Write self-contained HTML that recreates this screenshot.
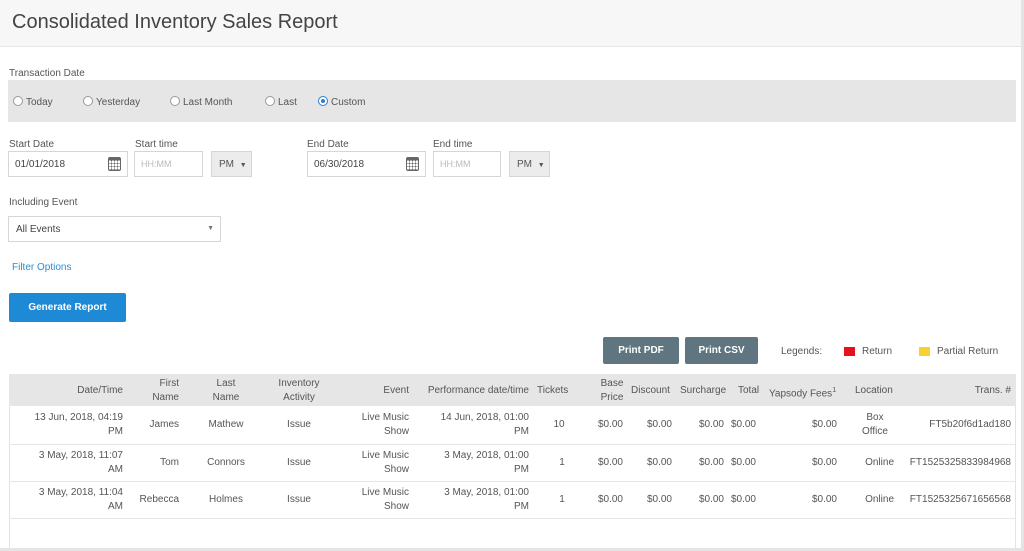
<!DOCTYPE html><html><head><style>
*{margin:0;padding:0;box-sizing:border-box}
body{width:1024px;height:551px;background:#fff;font-family:"Liberation Sans",sans-serif;color:#444;position:relative;overflow:hidden}
.a{position:absolute;white-space:nowrap}
.lbl{font-size:10px;color:#555}
.inp{position:absolute;border:1px solid #d6d6d6;background:#fff;height:26px;font-size:10px;padding:7px 6px;color:#444;white-space:nowrap}
.sel{position:absolute;border:1px solid #d6d6d6;background:#ececec;height:26px;font-size:10px;padding:7px 7px;color:#555;white-space:nowrap}
.rad{display:inline-block;width:10px;height:10px;border:1px solid #999;border-radius:50%;vertical-align:-1px;margin-right:3px;background:#fff;position:relative}
.t{position:absolute;font-size:10px;color:#555;line-height:14px;white-space:nowrap}
.r{text-align:right}.c{text-align:center}
.btn{position:absolute;background:#5f7681;color:#fff;font-size:10px;font-weight:bold;text-align:center;border-radius:2px;line-height:27px}
.cal{position:absolute;right:6px;top:5px;width:13px;height:14px;border:1.5px solid #666;border-top-width:3px;border-radius:2px;background:radial-gradient(circle,#666 0.8px,transparent 1px) 1px 2px/3px 3px}
</style></head><body>
<div class="a" style="left:0;top:0;width:1024px;height:47px;background:#f7f7f7;border-bottom:1px solid #e6e6e6"></div>
<div class="a" style="left:12px;top:11px;font-size:20px;color:#444">Consolidated Inventory Sales Report</div>
<div class="a" style="right:0;top:0;width:3px;height:551px;background:#e4e4e4"></div>
<div class="a" style="left:0;bottom:0;width:1024px;height:3px;background:#e4e4e4"></div>
<div class="a lbl" style="left:9px;top:68px">Transaction Date</div>
<div class="a" style="left:8px;top:80px;width:1008px;height:42px;background:#e6e6e6"></div>
<div class="a lbl" style="left:13px;top:96px"><span class="rad"></span>Today</div>
<div class="a lbl" style="left:83px;top:96px"><span class="rad"></span>Yesterday</div>
<div class="a lbl" style="left:170px;top:96px"><span class="rad"></span>Last Month</div>
<div class="a lbl" style="left:265px;top:96px"><span class="rad"></span>Last</div>
<div class="a lbl" style="left:318px;top:96px"><span class="rad" style="border-color:#2a7fd4"><span style="position:absolute;left:2px;top:2px;width:4px;height:4px;border-radius:50%;background:#2a7fd4"></span></span>Custom</div>
<div class="a lbl" style="left:9px;top:139px">Start Date</div>
<div class="a lbl" style="left:135px;top:139px">Start time</div>
<div class="a lbl" style="left:307px;top:139px">End Date</div>
<div class="a lbl" style="left:433px;top:139px">End time</div>
<div class="inp" style="left:8px;top:151px;width:120px">01/01/2018<span class="cal"></span></div>
<div class="inp" style="left:134px;top:151px;width:69px;color:#bbb;font-size:9px">HH:MM</div>
<div class="sel" style="left:211px;top:151px;width:41px">PM <span style="font-size:7px;margin-left:3px">▼</span></div>
<div class="inp" style="left:307px;top:151px;width:119px">06/30/2018<span class="cal"></span></div>
<div class="inp" style="left:433px;top:151px;width:68px;color:#bbb;font-size:9px">HH:MM</div>
<div class="sel" style="left:509px;top:151px;width:41px">PM <span style="font-size:7px;margin-left:3px">▼</span></div>
<div class="a lbl" style="left:9px;top:197px">Including Event</div>
<div class="inp" style="left:8px;top:216px;width:213px;height:26px;padding-left:7px">All Events<span style="position:absolute;right:6px;top:8px;font-size:7px;color:#777">▼</span></div>
<div class="a" style="left:12px;top:262px;font-size:10px;color:#2a8fd4">Filter Options</div>
<div class="btn" style="left:9px;top:293px;width:117px;height:29px;line-height:29px;background:#1e8ad6">Generate Report</div>
<div class="btn" style="left:603px;top:337px;width:76px;height:27px">Print PDF</div>
<div class="btn" style="left:685px;top:337px;width:73px;height:27px">Print CSV</div>
<div class="a lbl" style="left:781px;top:346px">Legends:</div>
<div class="a" style="left:844px;top:347px;width:11px;height:9px;background:#e8101b"></div>
<div class="a lbl" style="left:862px;top:346px">Return</div>
<div class="a" style="left:919px;top:347px;width:11px;height:9px;background:#f8d030"></div>
<div class="a lbl" style="left:937px;top:346px">Partial Return</div>
<div class="a" style="left:9px;top:374px;width:1007px;height:175px;border:1px solid #e3e3e3;border-bottom:none"></div>
<div class="a" style="left:9px;top:374px;width:1007px;height:32px;background:#e6e6e6"></div>
<div class="a" style="left:9px;top:444px;width:1007px;height:1px;background:#e6e6e6"></div>
<div class="a" style="left:9px;top:481px;width:1007px;height:1px;background:#e6e6e6"></div>
<div class="a" style="left:9px;top:518px;width:1007px;height:1px;background:#e6e6e6"></div>
<div class="t r" style="right:901px;top:384px">Date/Time</div>
<div class="t r" style="right:845px;top:377px">First<br>Name</div>
<div class="t c" style="left:206px;width:40px;top:377px">Last<br>Name</div>
<div class="t c" style="left:269px;width:60px;top:377px">Inventory<br>Activity</div>
<div class="t r" style="right:615px;top:384px">Event</div>
<div class="t r" style="right:495px;top:384px">Performance date/time</div>
<div class="t" style="left:537px;top:384px">Tickets</div>
<div class="t c" style="left:596px;width:32px;top:377px">Base<br>Price</div>
<div class="t" style="left:631px;top:384px">Discount</div>
<div class="t" style="left:680px;top:384px">Surcharge</div>
<div class="t" style="left:738px;top:384px">Total</div>
<div class="t" style="left:769px;top:384px">Yapsody Fees<sup style="font-size:7px">1</sup></div>
<div class="t" style="left:855px;top:384px">Location</div>
<div class="t r" style="right:13px;top:384px">Trans. #</div>

<div class="t r" style="right:901px;top:411px">13 Jun, 2018, 04:19<br>PM</div>
<div class="t r" style="right:845px;top:418px">James</div>
<div class="t c" style="left:191px;width:70px;top:418px">Mathew</div>
<div class="t c" style="left:269px;width:60px;top:418px">Issue</div>
<div class="t r" style="right:615px;top:411px">Live Music<br>Show</div>
<div class="t r" style="right:495px;top:411px">14 Jun, 2018, 01:00<br>PM</div>
<div class="t c" style="left:537px;width:44px;top:418px">10</div>
<div class="t r" style="right:401px;top:418px">$0.00</div>
<div class="t r" style="right:352px;top:418px">$0.00</div>
<div class="t r" style="right:300px;top:418px">$0.00</div>
<div class="t r" style="right:268px;top:418px">$0.00</div>
<div class="t r" style="right:187px;top:418px">$0.00</div>
<div class="t c" style="left:850px;width:50px;top:411px">Box<br>Office</div>
<div class="t r" style="right:13px;top:418px">FT5b20f6d1ad180</div>

<div class="t r" style="right:901px;top:449px">3 May, 2018, 11:07<br>AM</div>
<div class="t r" style="right:845px;top:456px">Tom</div>
<div class="t c" style="left:191px;width:70px;top:456px">Connors</div>
<div class="t c" style="left:269px;width:60px;top:456px">Issue</div>
<div class="t r" style="right:615px;top:449px">Live Music<br>Show</div>
<div class="t r" style="right:495px;top:449px">3 May, 2018, 01:00<br>PM</div>
<div class="t c" style="left:537px;width:50px;top:456px">1</div>
<div class="t r" style="right:401px;top:456px">$0.00</div>
<div class="t r" style="right:352px;top:456px">$0.00</div>
<div class="t r" style="right:300px;top:456px">$0.00</div>
<div class="t r" style="right:268px;top:456px">$0.00</div>
<div class="t r" style="right:187px;top:456px">$0.00</div>
<div class="t r" style="right:130px;top:456px">Online</div>
<div class="t r" style="right:13px;top:456px">FT1525325833984968</div>

<div class="t r" style="right:901px;top:486px">3 May, 2018, 11:04<br>AM</div>
<div class="t r" style="right:845px;top:493px">Rebecca</div>
<div class="t c" style="left:191px;width:70px;top:493px">Holmes</div>
<div class="t c" style="left:269px;width:60px;top:493px">Issue</div>
<div class="t r" style="right:615px;top:486px">Live Music<br>Show</div>
<div class="t r" style="right:495px;top:486px">3 May, 2018, 01:00<br>PM</div>
<div class="t c" style="left:537px;width:50px;top:493px">1</div>
<div class="t r" style="right:401px;top:493px">$0.00</div>
<div class="t r" style="right:352px;top:493px">$0.00</div>
<div class="t r" style="right:300px;top:493px">$0.00</div>
<div class="t r" style="right:268px;top:493px">$0.00</div>
<div class="t r" style="right:187px;top:493px">$0.00</div>
<div class="t r" style="right:130px;top:493px">Online</div>
<div class="t r" style="right:13px;top:493px">FT1525325671656568</div>
</body></html>
